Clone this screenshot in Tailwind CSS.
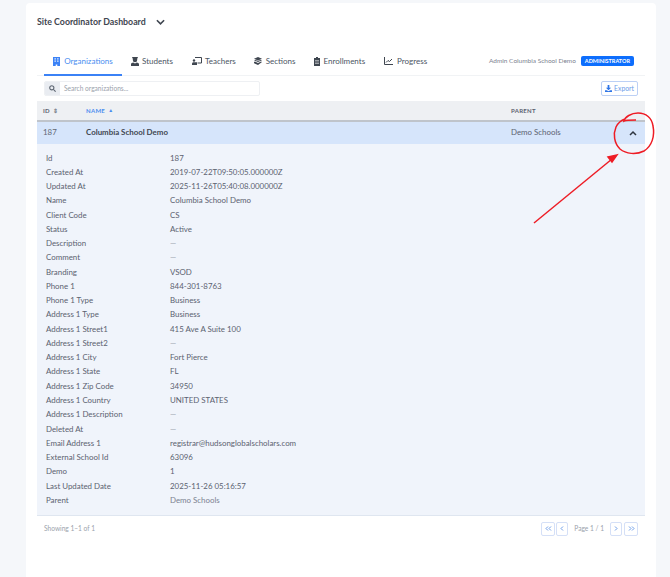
<!DOCTYPE html>
<html lang="en">
<head>
  <meta charset="UTF-8">
  <title>Site Coordinator Dashboard</title>
  <script src="https://cdn.jsdelivr.net/npm/@tailwindcss/browser@4"></script>
</head>
<body class="relative h-[577px] overflow-hidden bg-[#f5f7fa] font-['Lato','Noto_Sans',sans-serif] text-[#4b5563]">
  <div class="ml-[26px] mt-[3px] h-[600px] w-[630px] rounded-t-[4px] bg-white px-[11px]">
    <!-- title -->
    <div class="flex h-[37px] items-center text-[8.8px] font-bold text-[#3f4650]">
      <span>Site Coordinator Dashboard</span>
      <svg class="ml-[10px] h-[8px] w-[9px]" viewBox="0 0 10 8" fill="none" stroke="#3f4650" stroke-width="1.8"><path d="M1 2l4 4 4-4"/></svg>
    </div>

    <!-- tabs -->
    <div class="mt-[7px] flex h-[29px] items-center justify-between border-b border-[#f1f3f5] pl-[7px] pr-[11px] text-[8px] text-[#4b5563]">
      <div class="flex h-full items-center">
        <div class="flex h-[29px] w-[78px] items-center justify-center gap-[4px] border-b-2 border-[#3b82f6] pt-[2px] text-[#4a8df0]">
          <svg class="h-[9px] w-[7px]" viewBox="0 0 7 9" fill="#3b82f6"><path fill-rule="evenodd" d="M0 0h7v9H4.300V7.400H2.700V9H0zM1.500 1.200v1.200h1.300V1.200zm2.700 0v1.200h1.300V1.200zM1.500 3.600v1.200h1.300V3.600zm2.700 0v1.200h1.300V3.600z"/></svg>
          Organizations
        </div>
        <div class="ml-[9px] flex items-center gap-[3px]">
          <svg class="h-[9px] w-[8px]" viewBox="0 0 8 9" fill="#3f4650"><path d="M1.200 0h5.600v1.200H6.200V3a2.200 2.200 0 0 1-4.400 0V1.200h-.6zM0 9V7.200C0 6 1.200 5.500 2.300 5.400L4 6.600l1.700-1.200C6.800 5.500 8 6 8 7.200V9z"/></svg>
          Students
        </div>
        <div class="ml-[19px] flex items-center gap-[3px]">
          <svg class="h-[8px] w-[10px]" viewBox="0 0 10 8" fill="none" stroke="#3f4650"><path d="M3 .5h6.500v5.500H5.500"/><circle cx="2" cy="3.500" r="1.200" fill="#3f4650" stroke="none"/><path d="M0 8V6.600C0 5.600 1 5.200 2 5.200h3V8z" fill="#3f4650" stroke="none"/></svg>
          Teachers
        </div>
        <div class="ml-[18px] flex items-center gap-[4px]">
          <svg class="h-[8px] w-[8px]" viewBox="0 0 8 8" fill="#3f4650"><path d="M4 0l4 1.700L4 3.400 0 1.700zM0 3.200l1-.4L4 4.100l3-1.300 1 .4L4 5zM0 5l1-.4L4 5.900l3-1.300 1 .4L4 8 0 6.200z"/></svg>
          Sections
        </div>
        <div class="ml-[18px] flex items-center gap-[4px]">
          <svg class="h-[9px] w-[6px]" viewBox="0 0 6 9" fill="#3f4650"><path d="M2 0h2v1h2v8H0V1h2z"/><path d="M1 3.500h4M1 5h4M1 6.500h4" stroke="#fff" stroke-width=".5"/></svg>
          Enrollments
        </div>
        <div class="ml-[19px] flex items-center gap-[4px]">
          <svg class="h-[8px] w-[9px]" viewBox="0 0 9 8" fill="none" stroke="#3f4650"><path d="M.5 0v7.500H9"/><path d="M2 5.500l2-2 1.500 1L8 2"/></svg>
          Progress
        </div>
      </div>
      <div class="flex items-center gap-[5px]">
        <span class="text-[6.5px] text-[#7b8290]">Admin Columbia School Demo</span>
        <span class="rounded-[2px] bg-[#0d6efd] px-[4px] py-[1px] text-[5.5px] font-bold text-white">ADMINISTRATOR</span>
      </div>
    </div>

    <!-- search and export -->
    <div class="flex h-[25px] items-center justify-between px-[7px]">
      <div class="flex h-[15px] w-[216px] overflow-hidden rounded-[2px] border border-[#eef0f3]">
        <div class="flex w-[15px] items-center justify-center bg-[#e9ecf1]">
          <svg class="h-[7px] w-[7px]" viewBox="0 0 8 8" fill="none" stroke="#5f6773" stroke-width="1.3"><circle cx="3.200" cy="3.200" r="2.400"/><path d="M5 5l2.600 2.600"/></svg>
        </div>
        <span class="pl-[4px] text-[6.6px] leading-[13px] text-[#9aa1ab]">Search organizations...</span>
      </div>
      <div class="flex h-[15px] items-center gap-[2px] rounded-[2px] border border-[#bcd0f5] px-[3px] text-[6.8px] text-[#6d9ce8]">
        <svg class="h-[7px] w-[7px]" viewBox="0 0 8 8" fill="#2f75e6"><path d="M3 0h2v3h2L4 6 1 3h2zM0 6h2l2 1 2-1h2v2H0z"/></svg>
        Export
      </div>
    </div>

    <!-- table head -->
    <div class="flex h-[21px] items-center border-b-2 border-[#bfc4cb] bg-[#eef0f3] text-[6px] font-bold tracking-[0.3px] text-[#5b6270]">
      <div class="flex w-[49px] items-center gap-[3px] pl-[6px]">ID <span class="text-[6px] leading-none text-[#7a818c]">⇕</span></div>
      <div class="flex w-[425px] items-center gap-[3px] text-[#4a8df0]">NAME <span class="text-[5px] leading-none">▲</span></div>
      <div>PARENT</div>
    </div>

    <!-- expanded row -->
    <div class="flex h-[22px] items-center bg-[#d6e5fb] text-[7.9px]">
      <div class="w-[49px] pl-[6px] text-[#5f6773]">187</div>
      <div class="w-[425px] font-bold text-[#3f4650]">Columbia School Demo</div>
      <div class="w-[118px] text-[#5b6270]">Demo Schools</div>
      <svg class="h-[6px] w-[8px]" viewBox="0 0 8 6" fill="none" stroke="#2f3640" stroke-width="1.500"><path d="M1 5l3-3 3 3"/></svg>
    </div>

    <!-- details -->
    <div class="grid h-[372px] grid-cols-[124px_1fr] content-start border-b border-[#dfe6f0] bg-[#f0f4fb] pl-[9px] pt-[6.5px] text-[7.9px] leading-[14.27px] text-[#5b6270]">
      <div>Id</div><div>187</div>
      <div>Created At</div><div>2019-07-22T09:50:05.000000Z</div>
      <div>Updated At</div><div>2025-11-26T05:40:08.000000Z</div>
      <div>Name</div><div>Columbia School Demo</div>
      <div>Client Code</div><div>CS</div>
      <div>Status</div><div>Active</div>
      <div>Description</div><div class="text-[#9aa1ab]">—</div>
      <div>Comment</div><div class="text-[#9aa1ab]">—</div>
      <div>Branding</div><div>VSOD</div>
      <div>Phone 1</div><div>844-301-8763</div>
      <div>Phone 1 Type</div><div>Business</div>
      <div>Address 1 Type</div><div>Business</div>
      <div>Address 1 Street1</div><div>415 Ave A Suite 100</div>
      <div>Address 1 Street2</div><div class="text-[#9aa1ab]">—</div>
      <div>Address 1 City</div><div>Fort Pierce</div>
      <div>Address 1 State</div><div>FL</div>
      <div>Address 1 Zip Code</div><div>34950</div>
      <div>Address 1 Country</div><div>UNITED STATES</div>
      <div>Address 1 Description</div><div class="text-[#9aa1ab]">—</div>
      <div>Deleted At</div><div class="text-[#9aa1ab]">—</div>
      <div>Email Address 1</div><div>registrar@hudsonglobalscholars.com</div>
      <div>External School Id</div><div>63096</div>
      <div>Demo</div><div>1</div>
      <div>Last Updated Date</div><div>2025-11-26 05:16:57</div>
      <div>Parent</div><div class="text-[#7b8290]">Demo Schools</div>
    </div>

    <!-- footer -->
    <div class="flex h-[25px] items-center justify-between px-[7px] text-[6.6px] text-[#9aa1ab]">
      <span>Showing 1–1 of 1</span>
      <div class="flex items-center">
        <button class="flex h-[14px] w-[14px] items-center justify-center rounded-[2px] border border-[#d5e0f7]">
          <svg class="h-[5px] w-[7px]" viewBox="0 0 7 5" fill="none" stroke="#6d9ce8"><path d="M3 .5l-2 2 2 2M6 .5l-2 2 2 2"/></svg>
        </button>
        <button class="ml-[1px] flex h-[14px] w-[12px] items-center justify-center rounded-[2px] border border-[#d5e0f7]">
          <svg class="h-[5px] w-[4px]" viewBox="0 0 4 5" fill="none" stroke="#6d9ce8"><path d="M3 .5l-2 2 2 2"/></svg>
        </button>
        <span class="mx-[6px]">Page 1 / 1</span>
        <button class="flex h-[14px] w-[12px] items-center justify-center rounded-[2px] border border-[#d5e0f7]">
          <svg class="h-[5px] w-[4px]" viewBox="0 0 4 5" fill="none" stroke="#6d9ce8"><path d="M1 .5l2 2-2 2"/></svg>
        </button>
        <button class="ml-[2px] flex h-[14px] w-[14px] items-center justify-center rounded-[2px] border border-[#d5e0f7]">
          <svg class="h-[5px] w-[7px]" viewBox="0 0 7 5" fill="none" stroke="#6d9ce8"><path d="M1 .5l2 2-2 2M4 .5l2 2-2 2"/></svg>
        </button>
      </div>
    </div>
  </div>

  <!-- hand-drawn annotation over the page -->
  <svg class="absolute left-0 top-0 h-[577px] w-[670px]" viewBox="0 0 670 577" fill="none" stroke="#ee1c25" stroke-width="1.500">
    <path d="M636 120c-5 0-10 0-12 1 1-4 7-8 14-8 8 0 14 5 15 13 2 10-1 20-9 25-8 4-18 3-24-2-6-6-7-15-4-22 2-4 6-7 9-8"/>
    <path d="M534 223L612 159"/>
    <path d="M617 155l-9 2 4 5z" fill="#ee1c25"/>
  </svg>
</body>
</html>
